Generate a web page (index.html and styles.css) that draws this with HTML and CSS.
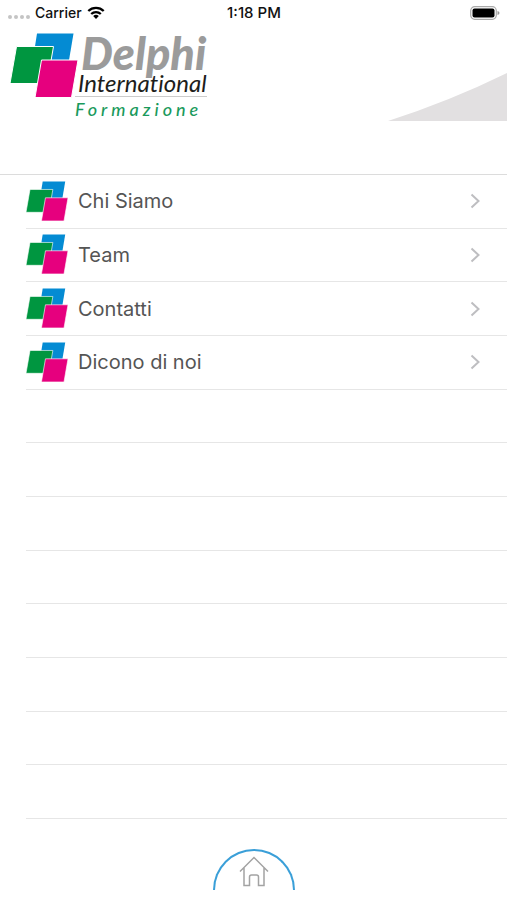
FILE: index.html
```html
<!DOCTYPE html>
<html lang="it">
<head>
<meta charset="UTF-8" />
<meta name="viewport" content="width=device-width, initial-scale=1" />
<title>Delphi International Formazione</title>
<link rel="stylesheet" href="styles.css">
</head>
<body>

<svg class="defs" aria-hidden="true">
  <symbol id="mark" viewBox="0 0 68 66">
    <path d="M27 0.500H63.500L56 45H20Z" fill="#048bd3"/>
    <path d="M6.500 13.500H43.500L37 50.500H0Z" fill="#009640" stroke="#fff"/>
    <path d="M31.500 27H68L61.500 64.500H25Z" fill="#e6007e" stroke="#fff"/>
  </symbol>
  <symbol id="chevron" viewBox="0 0 10 16">
    <path d="M1.500 1.500L8.500 8L1.500 14.500" fill="none" stroke="#bebec1" stroke-width="2"/>
  </symbol>
</svg>

<div class="status">
  <div class="carrier">
    <span class="signal"><i></i><i></i><i></i><i></i></span>
    <span>Carrier</span>
    <svg class="wifi" viewBox="0 0 18 13" aria-hidden="true">
      <path d="M1.300 5A11 11 0 0 1 16.700 5M4.200 8A7 7 0 0 1 13.800 8" fill="none" stroke="#000" stroke-width="2.300"/>
      <path d="M9 13L6.200 10.100A4 4 0 0 1 11.800 10.100Z"/>
    </svg>
  </div>
  <span class="time">1:18 PM</span>
  <svg class="battery" viewBox="0 0 30 14" aria-hidden="true">
    <rect x="0.700" y="0.700" width="25.600" height="12.600" rx="4" fill="none" stroke="#aaa" stroke-width="1.200"/>
    <rect x="2.500" y="2.500" width="22" height="9" rx="2"/>
    <path d="M27.500 5V9Q29.500 8.500 29.500 7T27.500 5Z" fill="#999"/>
  </svg>
</div>

<header class="header">
  <div class="logo">
    <svg class="logo-mark" aria-hidden="true"><use href="#mark"/></svg>
    <div class="logo-text">
      <span class="delphi">Delphi</span>
      <span class="international">International</span>
      <span class="formazione">Formazione</span>
    </div>
  </div>
  <svg class="wedge" viewBox="0 0 119 48" aria-hidden="true">
    <path d="M0 48Q62 28 119 0V48Z" fill="#e2e0e1"/>
  </svg>
</header>

<ul class="list">
  <li><a href="#chi-siamo"><svg class="row-mark"><use href="#mark"/></svg><span>Chi Siamo</span><svg class="chevron"><use href="#chevron"/></svg></a></li>
  <li><a href="#team"><svg class="row-mark"><use href="#mark"/></svg><span>Team</span><svg class="chevron"><use href="#chevron"/></svg></a></li>
  <li><a href="#contatti"><svg class="row-mark"><use href="#mark"/></svg><span>Contatti</span><svg class="chevron"><use href="#chevron"/></svg></a></li>
  <li><a href="#dicono-di-noi"><svg class="row-mark"><use href="#mark"/></svg><span>Dicono di noi</span><svg class="chevron"><use href="#chevron"/></svg></a></li>
  <li></li>
  <li></li>
  <li></li>
  <li></li>
  <li></li>
  <li></li>
  <li></li>
  <li></li>
</ul>

<footer class="footer">
  <a class="home" href="#home" aria-label="Home">
    <svg viewBox="0 0 30 31" aria-hidden="true">
      <path d="M1 15.500L15 1.500L29 15.500M5 12V29.500H10.500V21Q10.500 19 12.500 19H17.500Q19.500 19 19.500 21V29.500H25V12" fill="none" stroke="#a3a3a3" stroke-width="1.500"/>
    </svg>
  </a>
</footer>

</body>
</html>
```

FILE: styles.css
```css
* {
  box-sizing: border-box;
}
body {
  display: flex;
  flex-direction: column;
  min-height: 100vh;
  margin: 0;
  background: #fff;
  color: #555;
  font-family: Inter, "Liberation Sans", sans-serif;
}
svg {
  display: block;
}
.defs {
  position: absolute;
  width: 0;
  height: 0;
}

/* status bar */
.status {
  display: grid;
  grid-template-columns: 1fr auto 1fr;
  align-items: center;
  height: 25px;
  padding: 0 7px 0 8px;
  color: #111;
  font-size: 14px;
  font-weight: 500;
}
.time {
  font-size: 15px;
}
.carrier {
  display: flex;
  align-items: center;
  gap: 5px;
}
.signal {
  display: flex;
  gap: 2px;
  padding-top: 8px;
}
.signal i {
  width: 4px;
  height: 4px;
  border-radius: 50%;
  background: #c4c4c4;
}
.wifi {
  width: 18px;
  height: 13px;
}
.battery {
  justify-self: end;
  width: 30px;
  height: 14px;
}

/* header */
.header {
  display: flex;
  justify-content: space-between;
  align-items: flex-end;
  height: 150px;
  padding: 0 0 53px 10px;
  border-bottom: 1px solid #dcdcdc;
}
.logo {
  display: flex;
  align-items: flex-start;
}
.logo-mark {
  width: 68px;
  height: 66px;
}
.logo-text {
  display: flex;
  flex-direction: column;
  margin-left: -3px;
  font-family: Lato, sans-serif;
  font-style: italic;
  font-variant-ligatures: none;
  white-space: nowrap;
}
.delphi {
  padding-left: 6px;
  color: #9b9b9b;
  font-size: 45px;
  font-weight: 900;
  line-height: 40px;
}
.international {
  padding: 0 0 3px 3px;
  border-bottom: 1px solid #ccc;
  color: #1d1d1b;
  font-size: 24px;
  line-height: 20px;
}
.formazione {
  color: #1a9a5c;
  font-size: 18px;
  font-weight: 500;
  letter-spacing: 4px;
  line-height: 24px;
}
.wedge {
  width: 119px;
  height: 48px;
}

/* menu */
.list {
  display: grid;
  grid-auto-rows: 1fr;
  flex: 1;
  margin: 0;
  padding: 0 0 0 26px;
  list-style: none;
}
.list li {
  border-bottom: 1px solid #e6e6e6;
}
.list a {
  display: flex;
  align-items: center;
  gap: 10px;
  height: 100%;
  padding-right: 27px;
  color: inherit;
  font-size: 20px;
  text-decoration: none;
}
.list span {
  flex: 1;
}
.row-mark {
  width: 42px;
  height: 41px;
}
.chevron {
  width: 10px;
  height: 16px;
}

/* home button */
.footer {
  display: flex;
  justify-content: center;
  padding: 30px 0 10px;
}
.home {
  display: flex;
  justify-content: center;
  width: 82px;
  height: 41px;
  padding-top: 5px;
  border: 2px solid #3a9fd8;
  border-bottom: 0;
  border-radius: 41px 41px 0 0;
}
.home svg {
  width: 30px;
  height: 31px;
}
```
